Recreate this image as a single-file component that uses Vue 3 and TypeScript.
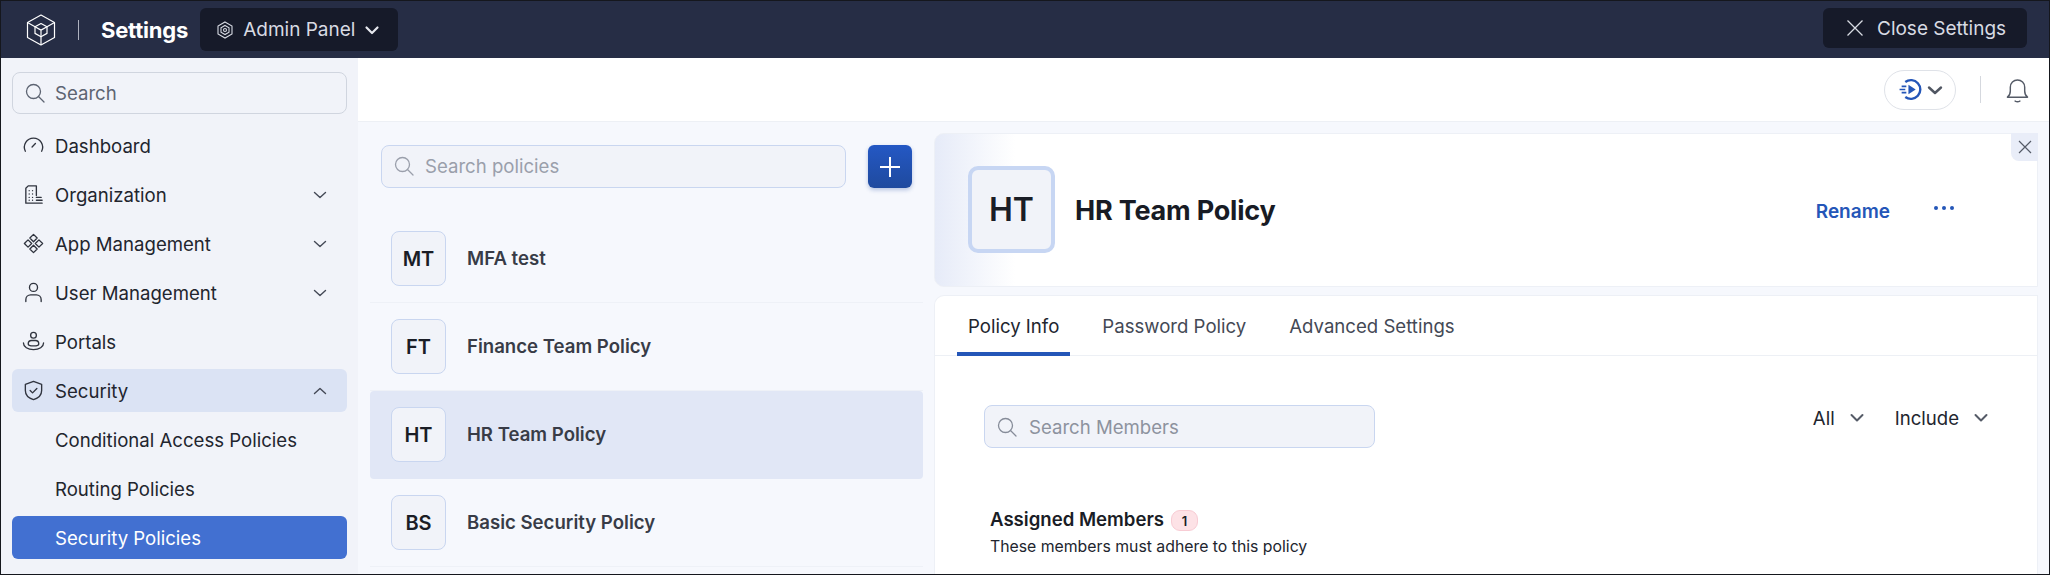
<script setup lang="ts">
interface NavItem { label: string; icon?: string[]; caret?: 'down' | 'up'; cls?: string }

const nav: NavItem[] = [
  { label: 'Dashboard', icon: ['M3.500 18A9.500 9.500 0 1 1 20.500 18', 'M10.500 13.500l3.500-3.500'] },
  { label: 'Organization', caret: 'down', icon: ['M15 13V3H6.500L4 5.500V21h17', 'M15 15h5M15 18h6', 'M7.500 8h.01M11 8h.01M7.500 11.500h.01M11 11.500h.01M7.500 15h.01M11 15h.01M7.500 18h.01M11 18h.01'] },
  { label: 'App Management', caret: 'down', icon: ['M12 2.500l3.800 3.800L12 10.100 8.200 6.300z', 'M12 13.900l3.800 3.800-3.800 3.800-3.800-3.800z', 'M6.300 8.200L10.100 12l-3.800 3.800L2.500 12z', 'M17.700 8.200l3.800 3.800-3.800 3.800-3.800-3.800z'] },
  { label: 'User Management', caret: 'down', icon: ['M12 2.500a4.200 4.200 0 1 0 0 8.400 4.200 4.200 0 0 0 0-8.400z', 'M4 21.500v-2a5 5 0 0 1 5-5h6a5 5 0 0 1 5 5v2'] },
  { label: 'Portals', icon: ['M12 2.500a3 3 0 1 0 0 6 3 3 0 0 0 0-6z', 'M6.500 14.500c0-2 1.500-3.500 3.500-3.500h4c2 0 3.500 1.500 3.500 3.500 0 1-2.500 2-5.500 2s-5.500-1-5.500-2z', 'M1.500 13.500c0 4 4.500 7 10.500 7s10.500-3 10.500-7'] },
  { label: 'Security', caret: 'up', cls: 'open', icon: ['M12 2.500l8.500 3v6.500c0 4.500-3.500 8-8.500 9.500-5-1.500-8.500-5-8.500-9.500V5.500z', 'M8.500 12l2.500 2.500 4.500-4.500'] },
  { label: 'Conditional Access Policies' },
  { label: 'Routing Policies' },
  { label: 'Security Policies', cls: 'active' },
]

const policies = [
  { code: 'MT', name: 'MFA test' },
  { code: 'FT', name: 'Finance Team Policy' },
  { code: 'HT', name: 'HR Team Policy', selected: true },
  { code: 'BS', name: 'Basic Security Policy' },
]

const tabs = ['Policy Info', 'Password Policy', 'Advanced Settings']
</script>

<template>
  <div class="app">
    <header class="topbar">
      <svg class="logo" viewBox="0 0 30 32" fill="none" stroke="#fff" stroke-width="1.200" stroke-linejoin="round">
        <path d="M15 1l13.500 7.500v15L15 31 1.500 23.500v-15z" />
        <path d="M15 9.500l6 3.300v6.600l-6 3.300-6-3.300v-6.600z" />
        <path d="M9 12.800l6 3.300 6-3.300M15 16.100V31M1.500 8.500L9 12.800M28.500 8.500L21 12.800" />
      </svg>
      <span class="sep"></span>
      <span class="brand">Settings</span>
      <button class="dark-btn panel">
        <svg viewBox="0 0 18 18" width="18" height="18" fill="none" stroke="#d8dbe3" stroke-width="1.100">
          <path d="M9 1l7 4v8l-7 4-7-4V5z" />
          <path d="M9 4.500l4 2.250v4.500l-4 2.250-4-2.250v-4.500z" />
          <circle cx="9" cy="9" r="1.500" />
        </svg>
        <span>Admin Panel</span>
        <svg viewBox="0 0 16 16" width="16" height="16" fill="none" stroke="#e6e8ee" stroke-width="2.200" stroke-linecap="round" stroke-linejoin="round">
          <path d="M2.500 5.500L8 11l5.500-5.500" />
        </svg>
      </button>
      <button class="dark-btn close">
        <svg viewBox="0 0 18 18" width="18" height="18" fill="none" stroke="#d8dbe3" stroke-width="1.300">
          <path d="M1.500 1.500l15 15M16.500 1.500l-15 15" />
        </svg>
        <span>Close Settings</span>
      </button>
    </header>

    <div class="body">
      <aside class="sidebar">
        <div class="field side-search">
          <svg class="glass" viewBox="0 0 20 20" fill="none" stroke="#5d6472" stroke-width="1.300" stroke-linecap="round">
            <circle cx="8.500" cy="8.500" r="7" /><path d="M13.500 13.500l5.500 5.500" />
          </svg>
          <span>Search</span>
        </div>
        <nav class="nav">
          <a v-for="item in nav" :key="item.label" class="nav-item" :class="item.cls">
            <svg v-if="item.icon" class="nav-icon" viewBox="0 0 24 24" fill="none" stroke="#30343f" stroke-width="1.400" stroke-linecap="round" stroke-linejoin="round">
              <path v-for="d in item.icon" :key="d" :d="d" />
            </svg>
            <span class="nav-label" :class="{ sub: !item.icon }">{{ item.label }}</span>
            <svg v-if="item.caret" class="caret" viewBox="0 0 14 8" fill="none" stroke="#444956" stroke-width="1.400" stroke-linecap="round" stroke-linejoin="round">
              <path :d="item.caret === 'down' ? 'M1.500 1.500L7 6.500l5.500-5' : 'M1.500 6.500L7 1.500l5.500 5'" />
            </svg>
          </a>
        </nav>
      </aside>

      <main class="main">
        <div class="toolbar">
          <div class="pill">
            <svg viewBox="0 0 24 24" width="25" height="25" fill="none" stroke="#2456b8" stroke-width="2.300">
              <path d="M7 4.800A9 9 0 1 1 7 19.200" />
              <path d="M10 7.500v9l7-4.500z" fill="#2456b8" stroke="none" />
              <path d="M3.500 9H8M1.500 12H7M3.500 15H8" stroke-width="1.600" />
            </svg>
            <svg viewBox="0 0 16 16" width="16" height="16" fill="none" stroke="#505662" stroke-width="2.400" stroke-linecap="round" stroke-linejoin="round">
              <path d="M2 5.500L8 11l6-5.500" />
            </svg>
          </div>
          <span class="tool-sep"></span>
          <svg class="bell" viewBox="0 0 24 26" fill="none" stroke="#555b67" stroke-width="1.500" stroke-linecap="round" stroke-linejoin="round">
            <path d="M1.500 20.500c2-1.500 3-3.500 3-6.500V10a7.500 7.500 0 0 1 15 0v4c0 3 1 5 3 6.500z" />
            <path d="M9.500 24.500c1.500.8 3.500.8 5 0" />
          </svg>
        </div>

        <div class="content">
          <section class="list">
            <div class="list-head">
              <div class="field tinted list-search">
                <svg class="glass" viewBox="0 0 20 20" fill="none" stroke="#9a9fab" stroke-width="1.300" stroke-linecap="round">
                  <circle cx="8.500" cy="8.500" r="7" /><path d="M13.500 13.500l5.500 5.500" />
                </svg>
                <span class="muted">Search policies</span>
              </div>
              <button class="plus">
                <svg viewBox="0 0 20 20" width="20" height="20" fill="none" stroke="#fff" stroke-width="2">
                  <path d="M10 0v20M0 10h20" />
                </svg>
              </button>
            </div>
            <div class="rows">
              <div v-for="p in policies" :key="p.code" class="row" :class="{ selected: p.selected }">
                <span class="avatar">{{ p.code }}</span>
                <span class="row-name">{{ p.name }}</span>
              </div>
            </div>
          </section>

          <section class="detail">
            <div class="head-card">
              <span class="avatar big">HT</span>
              <h1 class="title">HR Team Policy</h1>
              <a class="rename">Rename</a>
              <span class="dots"><i></i><i></i><i></i></span>
              <button class="corner-close">
                <svg viewBox="0 0 14 14" width="14" height="14" fill="none" stroke="#555b67" stroke-width="1.200">
                  <path d="M1 1l12 12M13 1L1 13" />
                </svg>
              </button>
            </div>

            <div class="tab-card">
              <div class="tabs">
                <span v-for="(t, i) in tabs" :key="t" class="tab" :class="{ on: i === 0 }">{{ t }}</span>
              </div>
              <div class="tab-body">
                <div class="filter-row">
                  <div class="field tinted member-search">
                    <svg class="glass" viewBox="0 0 20 20" fill="none" stroke="#868c99" stroke-width="1.300" stroke-linecap="round">
                      <circle cx="8.500" cy="8.500" r="7" /><path d="M13.500 13.500l5.500 5.500" />
                    </svg>
                    <span class="muted">Search Members</span>
                  </div>
                  <div class="filters">
                    <span v-for="f in ['All', 'Include']" :key="f" class="filter">
                      {{ f }}
                      <svg viewBox="0 0 14 10" width="14" height="10" fill="none" stroke="#555b67" stroke-width="2" stroke-linecap="round" stroke-linejoin="round">
                        <path d="M1.500 2L7 7.500 12.500 2" />
                      </svg>
                    </span>
                  </div>
                </div>
                <div class="assigned">
                  <div class="assigned-title">Assigned Members <span class="badge">1</span></div>
                  <p class="assigned-sub">These members must adhere to this policy</p>
                </div>
              </div>
            </div>
          </section>
        </div>
      </main>
    </div>
  </div>
</template>

<style>
html, body { margin: 0; overflow: hidden; }
</style>

<style scoped>
.app {
  box-sizing: border-box;
  width: 2050px;
  height: 575px;
  border: 1px solid #15171d;
  display: flex;
  flex-direction: column;
  overflow: hidden;
  font-family: Inter, "Noto Sans", sans-serif;
  font-size: 18.6px;
  color: #22252e;
}
.topbar {
  flex: none;
  height: 57px;
  background: #262d45;
  display: flex;
  align-items: center;
  padding: 0 22px 0 25px;
}
.logo { width: 30px; height: 32px; }
.sep { width: 1px; height: 20px; background: #aeb2bf; margin: 0 22px 0 22px; }
.brand { color: #fff; font-weight: 700; font-size: 22px; letter-spacing: -0.2px; }
.dark-btn {
  border: 0;
  background: #161a29;
  color: #d8dbe3;
  border-radius: 6px;
  font: inherit;
  display: flex;
  align-items: center;
}
.panel { height: 43px; margin-left: 12px; width: 198px; padding: 0 0 0 16px; gap: 9px; font-size: 19px; }
.close { height: 40px; margin-left: auto; width: 204px; padding: 0 0 0 23px; gap: 13px; margin-top: -3px; font-size: 19px; }

.body { flex: 1; display: flex; min-height: 0; }

.sidebar {
  flex: none;
  width: 357px;
  box-sizing: border-box;
  background: #f1f3f9;
  padding: 14px 11px 0;
}
.field {
  box-sizing: border-box;
  height: 43px;
  display: flex;
  align-items: center;
  border-radius: 8px;
  gap: 11px;
  padding: 0 12px;
}
.side-search { border: 1px solid #d0d5df; color: #5d6472; height: 42px; gap: 10px; }
.glass { width: 20px; height: 20px; flex: none; }
.nav { display: flex; flex-direction: column; gap: 6px; margin-top: 10px; }
.nav-item {
  height: 43px;
  display: flex;
  align-items: center;
  padding: 0 20px 0 10px;
  border-radius: 6px;
}
.nav-item.open { background: #dbe3f4; }
.nav-item.active { background: #4270d1; color: #fff; }
.nav-icon { width: 23px; height: 23px; flex: none; margin-right: 10px; }
.nav-label { padding-top: 1px; }
.nav-label.sub { margin-left: 33px; }
.caret { width: 14px; height: 8px; margin-left: auto; }

.main { flex: 1; min-width: 0; display: flex; flex-direction: column; }
.toolbar {
  flex: none;
  height: 64px;
  box-sizing: border-box;
  background: #fff;
  border-bottom: 1px solid #edf0f5;
  display: flex;
  align-items: center;
  justify-content: flex-end;
  padding: 0 20px 0 0;
}
.pill {
  box-sizing: border-box;
  width: 72px;
  height: 40px;
  border: 1px solid #dfe2e8;
  border-radius: 20px;
  display: flex;
  align-items: center;
  justify-content: center;
  gap: 4px;
}
.tool-sep { width: 1px; height: 27px; background: #d5d8de; margin: 0 25px 0 24px; }
.bell { width: 23px; height: 26px; }

.content { flex: 1; min-height: 0; display: flex; background: #f6f8fd; }

.list { flex: none; width: 576px; box-sizing: border-box; padding: 23px 11px 0 12px; }
.list-head { display: flex; gap: 22px; padding-left: 11px; }
.tinted { border: 1px solid #c9d6f0; background: #f1f3f9; }
.list-search { width: 465px; padding-bottom: 2px; }
.muted { color: #8d929e; }
.list .muted { color: #9a9fab; }
.plus {
  width: 44px;
  height: 43px;
  border: 0;
  border-radius: 6px;
  background: linear-gradient(#2458c4, #1f4a9e);
  box-shadow: 0 2px 4px rgba(31, 74, 158, 0.3);
  display: flex;
  align-items: center;
  justify-content: center;
}
.rows { margin-top: 27px; }
.row {
  box-sizing: border-box;
  height: 88px;
  display: flex;
  align-items: center;
  padding-left: 21px;
  gap: 21px;
  border-bottom: 1px solid #eef1f7;
}
.row.selected { background: #e1e7f6; border-radius: 4px; border-bottom-color: transparent; }
.avatar {
  box-sizing: border-box;
  width: 55px;
  height: 55px;
  flex: none;
  border: 1px solid #c9d6f0;
  border-radius: 8px;
  background: #f1f3f9;
  display: flex;
  align-items: center;
  justify-content: center;
  font-weight: 600;
  font-size: 20px;
  color: #1a1d26;
}
.row-name { font-weight: 600; color: #383c47; padding-bottom: 2px; }

.detail {
  flex: 1;
  min-width: 0;
  margin: 11px 11px 0 0;
  display: flex;
  flex-direction: column;
  gap: 8px;
}
.head-card {
  position: relative;
  flex: none;
  height: 154px;
  box-sizing: border-box;
  background: linear-gradient(90deg, #e6ebf8, #fff 80px);
  border: 1px solid #edf0f6;
  border-radius: 10px 0 0 10px;
  display: flex;
  align-items: center;
  padding: 0 83px 0 33px;
}
.avatar.big { width: 87px; height: 87px; border: 4px solid #c7d6f3; border-radius: 10px; font-size: 32px; margin-top: -2px; }
.title { margin: 0 0 0 20px; font-size: 27px; font-weight: 700; letter-spacing: -0.2px; color: #181b24; }
.rename { margin-left: auto; color: #2456b8; font-weight: 600; font-size: 19px; padding-top: 2px; }
.dots { display: flex; gap: 4px; margin-left: 44px; margin-top: -5px; }
.dots i { width: 4px; height: 4px; border-radius: 50%; background: #2456b8; }
.corner-close {
  position: absolute;
  top: -1px;
  right: -1px;
  width: 27px;
  height: 28px;
  border: 0;
  padding: 0;
  background: #e9edf8;
  border-radius: 0 0 0 8px;
  display: flex;
  align-items: center;
  justify-content: center;
}

.tab-card {
  flex: 1;
  min-height: 0;
  background: #fff;
  border: 1px solid #edf0f6;
  border-bottom: 0;
  border-radius: 10px 0 0 0;
}
.tabs {
  height: 60px;
  box-sizing: border-box;
  display: flex;
  gap: 21px;
  padding-left: 22px;
  border-bottom: 1px solid #edf0f5;
}
.tab {
  height: 60px;
  box-sizing: border-box;
  padding: 0 11px;
  display: flex;
  align-items: center;
  color: #444955;
}
.tab.on { color: #22252e; border-bottom: 4px solid #2456b8; padding-top: 4px; }

.tab-body { padding: 49px 49px 0 49px; }
.filter-row { display: flex; justify-content: space-between; }
.member-search { width: 391px; gap: 12px; }
.filters { display: flex; gap: 31px; height: 26px; align-items: center; }
.filter { display: flex; align-items: center; gap: 15px; }
.assigned { margin: 58px 0 0 6px; }
.assigned-title { font-weight: 600; color: #1a1d26; display: flex; align-items: center; gap: 7px; line-height: 26px; }
.badge {
  box-sizing: border-box;
  width: 27px;
  height: 21px;
  border: 1px solid #f8ccd4;
  border-radius: 9px;
  background: #fde2e6;
  font-size: 13px;
  line-height: 20px;
  text-align: center;
  margin-top: 2px;
}
.assigned-sub { margin: 4px 0 0; font-size: 15.8px; line-height: 22px; }
</style>
